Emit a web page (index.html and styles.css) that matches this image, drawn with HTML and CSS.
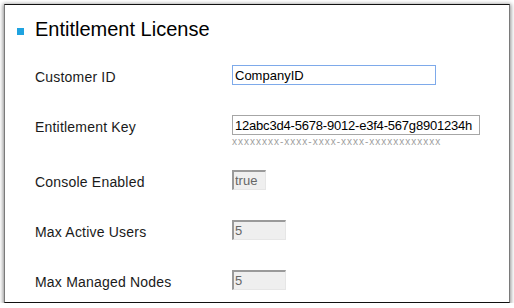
FILE: index.html
```html
<!DOCTYPE HTML>
<html lang="en">
<head>
    <meta charset="utf-8">
    <title>Entitlement License</title>
    <link rel="stylesheet" href="styles.css">
</head>
<body>
    <div class="frame">
        <div class="panel">
            <h2 class="panel-title"><span class="bullet"></span>Entitlement License</h2>

            <form class="license-form">
                <div class="form-row">
                    <label for="customer_id">Customer ID</label>
                    <div class="field">
                        <input type="text" id="customer_id" class="text-input is-focused" value="CompanyID">
                    </div>
                </div>
                <div class="form-row has-hint">
                    <label for="entitlement_key">Entitlement Key</label>
                    <div class="field">
                        <input type="text" id="entitlement_key" class="text-input key-input" value="12abc3d4-5678-9012-e3f4-567g8901234h">
                        <div class="hint">xxxxxxxx-xxxx-xxxx-xxxx-xxxxxxxxxxxx</div>
                    </div>
                </div>
                <div class="form-row">
                    <label for="console_enabled">Console Enabled</label>
                    <div class="field">
                        <input type="text" id="console_enabled" class="ro-input ro-short" value="true" readonly>
                    </div>
                </div>
                <div class="form-row">
                    <label for="max_active_users">Max Active Users</label>
                    <div class="field">
                        <input type="text" id="max_active_users" class="ro-input" value="5" readonly>
                    </div>
                </div>
                <div class="form-row">
                    <label for="max_managed_nodes">Max Managed Nodes</label>
                    <div class="field">
                        <input type="text" id="max_managed_nodes" class="ro-input" value="5" readonly>
                    </div>
                </div>
            </form>
        </div>
    </div>
</body>
</html>
```

FILE: styles.css
```css
body {
    margin: 0;
    font-family: "Liberation Sans", Arial, sans-serif;
    background-color: #fff;
    color: #1a1a1a;
}
.frame {
    padding: 4px 4px 0 4px;
}
.panel {
    width: 504px;
    height: 297px;
    box-sizing: content-box;
    padding: 0;
    background: white;
    border: 1px solid #111;
    border-left-color: #7a7a7a;
    border-right-color: #7a7a7a;
    box-shadow: 0 1px 4px 1px rgba(0, 0, 0, 0.45);
}
.panel-title {
    display: flex;
    align-items: flex-start;
    margin: 13px 0 24px 12px;
    font-size: 20px;
    font-weight: normal;
    line-height: 23px;
    color: #000;
}
.bullet {
    width: 7px;
    height: 7px;
    margin: 10px 11px 0 0;
    background-color: #1fa3e0;
}
.license-form {
    padding-left: 30px;
}
.form-row {
    display: flex;
    align-items: flex-start;
    margin-bottom: 30px;
}
.form-row.has-hint {
    margin-bottom: 22px;
}
.form-row label {
    width: 197px;
    height: 20px;
    box-sizing: border-box;
    flex-shrink: 0;
    padding-top: 2px;
    font-size: 14px;
    line-height: 20px;
    letter-spacing: 0.2px;
}
.field {
    display: flex;
    flex-direction: column;
}
.text-input,
.ro-input {
    height: 20px;
    box-sizing: border-box;
    margin: 0;
    padding: 0 2px;
    font-family: "Liberation Sans", Arial, sans-serif;
    font-size: 13px;
    outline: none;
}
.text-input {
    width: 204px;
    border: 1px solid #a6a6a6;
    color: #000;
}
.text-input.is-focused {
    border-color: #7eaaea;
}
.key-input {
    width: 248px;
    letter-spacing: -0.2px;
}
.hint {
    height: 12px;
    margin-top: 1px;
    font-size: 10px;
    line-height: 12px;
    letter-spacing: 1px;
    color: #a0a0a0;
}
.ro-input {
    width: 54px;
    padding: 0 1px;
    background-color: #efefef;
    border-style: solid;
    border-width: 2px 1px 1px 2px;
    border-color: #9a9a9a #e6e6e6 #e6e6e6 #9a9a9a;
    color: #666;
}
.ro-short {
    width: 34px;
}
```
